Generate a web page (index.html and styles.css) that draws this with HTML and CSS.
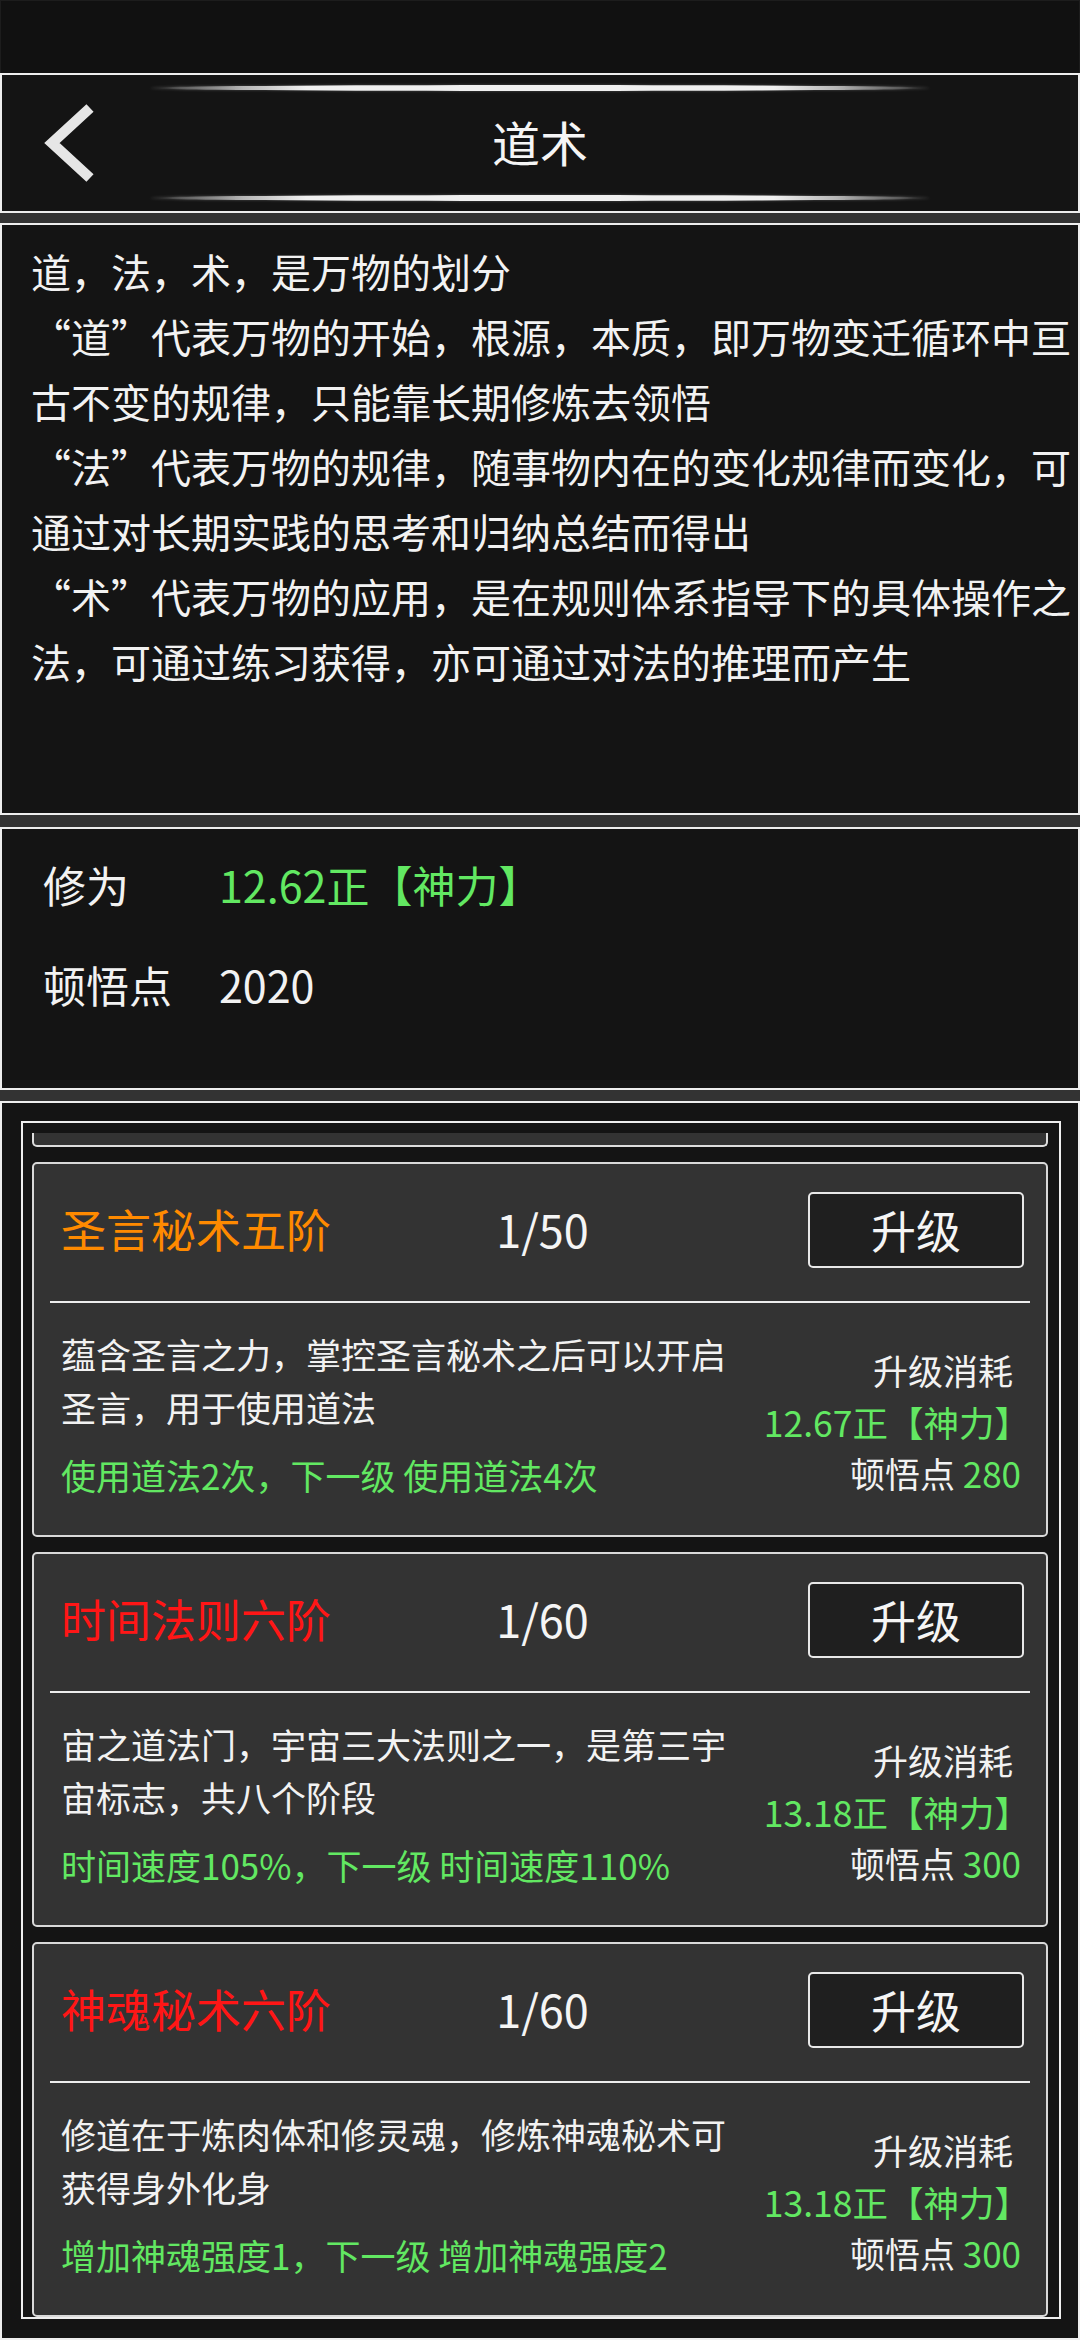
FILE: index.html
```html
<!DOCTYPE html>
<html lang="zh-CN">
<head>
<meta charset="utf-8">
<title>道术</title>
<link rel="stylesheet" href="styles.css">
</head>
<body>
<div class="status"></div>

<header class="panel header">
  <div class="deco"></div>
  <div class="bar">
    <svg class="back" width="52" height="80" viewBox="0 0 52 80" aria-label="返回">
      <polyline points="46,5 8,40 46,75" fill="none" stroke="#e6e6e6" stroke-width="10.5" stroke-linejoin="miter" stroke-linecap="butt"/>
    </svg>
    <h1 class="title">道术</h1>
    <span class="spacer"></span>
  </div>
  <div class="deco"></div>
</header>

<section class="panel intro">
  <p>道，法，术，是万物的划分</p>
  <p>“道”代表万物的开始，根源，本质，即万物变迁循环中亘<br>古不变的规律，只能靠长期修炼去领悟</p>
  <p>“法”代表万物的规律，随事物内在的变化规律而变化，可<br>通过对长期实践的思考和归纳总结而得出</p>
  <p>“术”代表万物的应用，是在规则体系指导下的具体操作之<br>法，可通过练习获得，亦可通过对法的推理而产生</p>
</section>

<section class="panel stats">
  <span class="label">修为</span><span class="value green">12.62正【神力】</span>
  <span class="label">顿悟点</span><span class="value">2020</span>
</section>

<section class="panel list">
  <div class="scroller">
    <div class="stub"></div>

    <div class="card">
      <div class="card-head">
        <span class="name orange">圣言秘术五阶</span>
        <span class="level">1/50</span>
        <button class="upgrade">升级</button>
      </div>
      <div class="divider"></div>
      <div class="card-body">
        <div class="info">
          <p class="desc">蕴含圣言之力，掌控圣言秘术之后可以开启圣言，用于使用道法</p>
          <p class="effect green">使用道法2次，下一级 使用道法4次</p>
        </div>
        <div class="cost">
          <div class="cost-title">升级消耗</div>
          <div class="cost-power green">12.67正【神力】</div>
          <div class="cost-points">顿悟点 <span class="green">280</span></div>
        </div>
      </div>
    </div>

    <div class="card">
      <div class="card-head">
        <span class="name red">时间法则六阶</span>
        <span class="level">1/60</span>
        <button class="upgrade">升级</button>
      </div>
      <div class="divider"></div>
      <div class="card-body">
        <div class="info">
          <p class="desc">宙之道法门，宇宙三大法则之一，是第三宇宙标志，共八个阶段</p>
          <p class="effect green">时间速度105%，下一级 时间速度110%</p>
        </div>
        <div class="cost">
          <div class="cost-title">升级消耗</div>
          <div class="cost-power green">13.18正【神力】</div>
          <div class="cost-points">顿悟点 <span class="green">300</span></div>
        </div>
      </div>
    </div>

    <div class="card">
      <div class="card-head">
        <span class="name red">神魂秘术六阶</span>
        <span class="level">1/60</span>
        <button class="upgrade">升级</button>
      </div>
      <div class="divider"></div>
      <div class="card-body">
        <div class="info">
          <p class="desc">修道在于炼肉体和修灵魂，修炼神魂秘术可获得身外化身</p>
          <p class="effect green">增加神魂强度1，下一级 增加神魂强度2</p>
        </div>
        <div class="cost">
          <div class="cost-title">升级消耗</div>
          <div class="cost-power green">13.18正【神力】</div>
          <div class="cost-points">顿悟点 <span class="green">300</span></div>
        </div>
      </div>
    </div>
  </div>
</section>
</body>
</html>
```
FILE: styles.css
```css
* {
  box-sizing: border-box;
}

html, body {
  margin: 0;
  padding: 0;
}

body {
  width: 1080px;
  height: 2340px;
  overflow: hidden;
  background: #333333;
  color: #f2f2f2;
  font-family: "Noto Sans CJK SC", "Noto Sans", sans-serif;
  display: flex;
  flex-direction: column;
}

.status {
  height: 73px;
  background: #111111;
  border: 1px solid #1d1d1d;
  border-bottom: none;
  flex: none;
}

.panel {
  border: 2px solid #eeeeee;
  background: #141414;
  flex: none;
}

/* header */
.header {
  height: 140px;
  padding: 10px 0;
  display: flex;
  flex-direction: column;
}

.deco {
  width: 780px;
  height: 6px;
  margin: 0 auto;
  border-radius: 50%;
  background: linear-gradient(90deg,
    rgba(90, 90, 90, 0) 0%,
    rgba(110, 110, 110, 0.8) 4%,
    rgba(200, 200, 200, 0.9) 12%,
    #f0f0f0 20%,
    #f0f0f0 80%,
    rgba(200, 200, 200, 0.9) 88%,
    rgba(110, 110, 110, 0.8) 96%,
    rgba(90, 90, 90, 0) 100%);
  box-shadow: 0 0 3px rgba(255, 255, 255, 0.25);
}

.bar {
  height: 104px;
  display: grid;
  grid-template-columns: 1fr auto 1fr;
  align-items: center;
}

.back {
  display: block;
  margin-left: 42px;
}

.title {
  margin: 0 0 4px;
  font-size: 48px;
  font-weight: 400;
  line-height: 96px;
  color: #f5f5f5;
}

/* intro */
.intro {
  height: 592px;
  margin-top: 10px;
  padding: 14px 10px 0 29px;
}

.intro p {
  margin: 0;
  font-size: 40px;
  line-height: 65px;
  white-space: nowrap;
}

/* stats */
.stats {
  height: 263px;
  margin-top: 12px;
  padding: 5px 0 0 41px;
  display: grid;
  grid-template-columns: 176px auto;
  grid-auto-rows: 100px;
  align-content: start;
  font-size: 43px;
  line-height: 100px;
}

.green {
  color: #62e862;
}

.orange {
  color: #ff8a00;
}

.red {
  color: #ff1616;
}

/* list */
.list {
  height: 1239px;
  margin-top: 11px;
  padding: 18px 17px 19px 19px;
  display: flex;
  flex-direction: column;
}

.scroller {
  flex: 1;
  border: 2px solid #eeeeee;
  background: #141414;
  overflow: hidden;
}

.stub {
  height: 14px;
  margin: 10px 11px 0 9px;
  background: #333333;
  border: 2px solid #dddddd;
  border-top: none;
  border-radius: 0 0 5px 5px;
}

.card {
  height: 375px;
  margin: 15px 11px 0 9px;
  background: #333333;
  border: 2px solid #d9d9d9;
  border-radius: 5px;
}

.card-head {
  height: 137px;
  padding: 0 22px 0 27px;
  display: grid;
  grid-template-columns: 1fr auto 1fr;
  align-items: center;
}

.name,
.level {
  font-size: 45px;
  line-height: 60px;
  margin-bottom: 8px;
}

.level {
  color: #f5f5f5;
}

.upgrade {
  justify-self: end;
  width: 216px;
  height: 76px;
  margin-top: -6px;
  padding: 0;
  background: #1f1f1f;
  border: 2px solid #e8e8e8;
  border-radius: 5px;
  color: #f5f5f5;
  font-family: inherit;
  font-size: 45px;
  line-height: 66px;
}

.divider {
  height: 2px;
  margin: 0 16px;
  background: #eeeeee;
}

.card-body {
  display: flex;
  justify-content: space-between;
  align-items: center;
  padding: 24px 30px 0 27px;
}

.info {
  width: 690px;
}

.info p {
  margin: 0;
  font-size: 35px;
  line-height: 53px;
}

.info .effect {
  margin-top: 15px;
}

.cost {
  margin-top: 15px;
  text-align: right;
  font-size: 35px;
  line-height: 51.5px;
}

.cost-title {
  margin-right: 3px;
}

.cost-power {
  margin-right: -14px;
  font-size: 35.5px;
}

.cost-points {
  margin-right: -5px;
}
```
